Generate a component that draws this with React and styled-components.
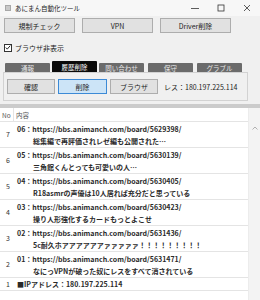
import React, { useState } from "react";
import styled, { createGlobalStyle } from "styled-components";

const Global = createGlobalStyle`
  html, body { margin: 0; padding: 0; background: #f0f0f0; }
  * { box-sizing: border-box; }
`;

const Window = styled.div`
  width: 260px;
  height: 300px;
  overflow: hidden;
  background: #f0f0f0;
  font-family: "Noto Sans CJK JP", "Noto Sans", sans-serif;
  color: #1a1a1a;
  display: flex;
  flex-direction: column;
`;

const TitleBar = styled.div`
  height: 16px;
  flex-shrink: 0;
  background: #f7f7f7;
  display: flex;
  align-items: center;
  padding-left: 5px;
  font-size: 6.5px;
`;

const AppIcon = styled.div`
  width: 6px;
  height: 6px;
  background: #c9c9c9;
  border: 1px solid #a8a8a8;
  margin-right: 4px;
`;

const Title = styled.span`
  flex: 1;
  color: #222;
`;

const Control = styled.div`
  width: 26px;
  height: 16px;
  display: flex;
  align-items: center;
  justify-content: center;
`;

const Body = styled.div`
  flex-shrink: 0;
  padding: 2px 4px 0 4px;
`;

const ButtonRow = styled.div`
  display: flex;
  gap: 7px;
`;

const Button = styled.button`
  width: ${(p) => p.$w || 71}px;
  height: 15px;
  padding: 0;
  font-family: inherit;
  font-size: 7px;
  color: #222;
  background: ${(p) => (p.$active ? "#cce4f7" : "#e1e1e1")};
  border: 1px solid ${(p) => (p.$active ? "#3c8ad6" : "#adadad")};
  display: flex;
  align-items: center;
  justify-content: center;
`;

const CheckRow = styled.label`
  display: flex;
  align-items: center;
  gap: 3px;
  margin-top: 10px;
  font-size: 7px;
  height: 9px;
`;

const Box = styled.span`
  width: 8px;
  height: 8px;
  background: #fff;
  border: 1px solid #333;
  display: flex;
  align-items: center;
  justify-content: center;
`;

const TabStrip = styled.div`
  display: flex;
  align-items: flex-end;
  gap: 4px;
  margin-top: 9px;
  padding-left: 1px;
  height: 11px;
`;

const Tab = styled.div`
  width: 45px;
  height: ${(p) => (p.$on ? 11 : 9)}px;
  margin: ${(p) => (p.$on ? "0 -2px" : "0")};
  background: ${(p) => (p.$on ? "#0a0a0a" : "#6b6b6b")};
  color: ${(p) => (p.$on ? "#fff" : "#e8e8e8")};
  font-size: 6.5px;
  display: flex;
  align-items: center;
  justify-content: center;
  border-radius: 1px 1px 0 0;
`;

const TabPanel = styled.div`
  margin-left: -1px;
  width: 245px;
  height: 29px;
  border: 1px solid #d2d2d2;
  background: #f0f0f0;
  display: flex;
  align-items: center;
  gap: 3px;
  padding-left: 3px;
`;

const ResText = styled.span`
  font-size: 7px;
  margin-left: 3px;
  color: #222;
`;

const Splitter = styled.div`
  flex-shrink: 0;
  height: 4px;
  margin-top: 3px;
  background: #cbcbcb;
`;

const ListWrap = styled.div`
  flex: 1;
  display: flex;
  background: #fff;
  min-height: 0;
`;

const List = styled.div`
  flex: 1;
  display: flex;
  flex-direction: column;
`;

const Header = styled.div`
  height: 14px;
  flex-shrink: 0;
  display: flex;
  align-items: center;
  font-size: 6.5px;
  color: #555;
  border-bottom: 1px solid #e4e4e4;
`;

const HeadCell = styled.div`
  width: ${(p) => (p.$w ? p.$w + "px" : "auto")};
  padding-left: 2px;
  border-right: ${(p) => (p.$w ? "1px solid #e4e4e4" : "none")};
  height: 100%;
  display: flex;
  align-items: center;
`;

const Row = styled.div`
  flex-shrink: 0;
  display: flex;
  align-items: stretch;
  border-bottom: 1px solid #e4e4e4;
  height: ${(p) => (p.$single ? 13 : 26)}px;
  font-size: 7px;
  font-weight: 700;
  color: #2a2a2a;
`;

const Num = styled.div`
  width: 14px;
  display: flex;
  align-items: center;
  justify-content: flex-end;
  padding-right: 4px;
  line-height: 1;
  font-weight: 400;
  color: #333;
`;

const Content = styled.div`
  padding-left: 3px;
  display: flex;
  flex-direction: column;
  justify-content: center;
  line-height: 12px;
  white-space: nowrap;
`;

const Sub = styled.div`
  padding-left: 16px;
`;

const Scrollbar = styled.div`
  width: 12px;
  background: #f3f3f3;
  border-left: 1px solid #ececec;
  display: flex;
  justify-content: center;
  padding-top: 18px;
`;

const rows = [
  { n: 7, id: "06", url: "5629398", t: "総集編で再評価されレゼ編も公開された…" },
  { n: 6, id: "05", url: "5630139", t: "三角館くんとっても可愛いの人…" },
  { n: 5, id: "04", url: "5630405", t: "R18asmrの声優は10人居れば充分だと思っている" },
  { n: 4, id: "03", url: "5630423", t: "操り人形強化するカードもっとよこせ" },
  { n: 3, id: "02", url: "5631436", t: "5c耐久ホアアアアアアァァァァァ！！！！！！！！！" },
  { n: 2, id: "01", url: "5631471", t: "なにっVPNが破った奴にレスをすべて消されている" },
];

const tabs = ["通報", "履歴削除", "問い合わせ", "保守", "グラブル"];

export default function App() {
  const [tab, setTab] = useState(1);
  const [hidden, setHidden] = useState(true);

  return (
    <Window>
      <Global />
      <TitleBar>
        <AppIcon />
        <Title>あにまん自動化ツール</Title>
        <Control>
          <svg width="8" height="8" viewBox="0 0 8 8"><path d="M0 4.5h8" stroke="#333" strokeWidth="0.8" /></svg>
        </Control>
        <Control>
          <svg width="8" height="8" viewBox="0 0 8 8"><rect x="1" y="1" width="6" height="6" fill="none" stroke="#333" strokeWidth="0.8" /></svg>
        </Control>
        <Control>
          <svg width="8" height="8" viewBox="0 0 8 8"><path d="M1 1l6 6M7 1l-6 6" stroke="#333" strokeWidth="0.8" /></svg>
        </Control>
      </TitleBar>
      <Body>
        <ButtonRow>
          <Button>規制チェック</Button>
          <Button>VPN</Button>
          <Button>Driver削除</Button>
        </ButtonRow>
        <CheckRow onClick={() => setHidden(!hidden)}>
          <Box>
            {hidden && (
              <svg width="7" height="7" viewBox="0 0 8 8"><path d="M1 4l2 2.2L7 1.5" fill="none" stroke="#111" strokeWidth="1.2" /></svg>
            )}
          </Box>
          ブラウザ非表示
        </CheckRow>
        <TabStrip>
          {tabs.map((t, i) => (
            <Tab key={t} $on={i === tab} onClick={() => setTab(i)}>{t}</Tab>
          ))}
        </TabStrip>
        <TabPanel>
          <Button $w={48}>確認</Button>
          <Button $w={49} $active>削除</Button>
          <Button $w={48}>ブラウザ</Button>
          <ResText>レス：180.197.225.114</ResText>
        </TabPanel>
      </Body>
      <Splitter />
      <ListWrap>
        <List>
          <Header>
            <HeadCell $w={14}>No</HeadCell>
            <HeadCell>内容</HeadCell>
          </Header>
          {rows.map((r) => (
            <Row key={r.n}>
              <Num>{r.n}</Num>
              <Content>
                <div>{r.id}：https://bbs.animanch.com/board/{r.url}/</div>
                <Sub>{r.t}</Sub>
              </Content>
            </Row>
          ))}
          <Row $single>
            <Num>1</Num>
            <Content>■IPアドレス：180.197.225.114</Content>
          </Row>
        </List>
        <Scrollbar>
          <svg width="6" height="4" viewBox="0 0 6 4"><path d="M0.5 3.5L3 1l2.5 2.5" fill="none" stroke="#a0a0a0" strokeWidth="0.8" /></svg>
        </Scrollbar>
      </ListWrap>
    </Window>
  );
}
